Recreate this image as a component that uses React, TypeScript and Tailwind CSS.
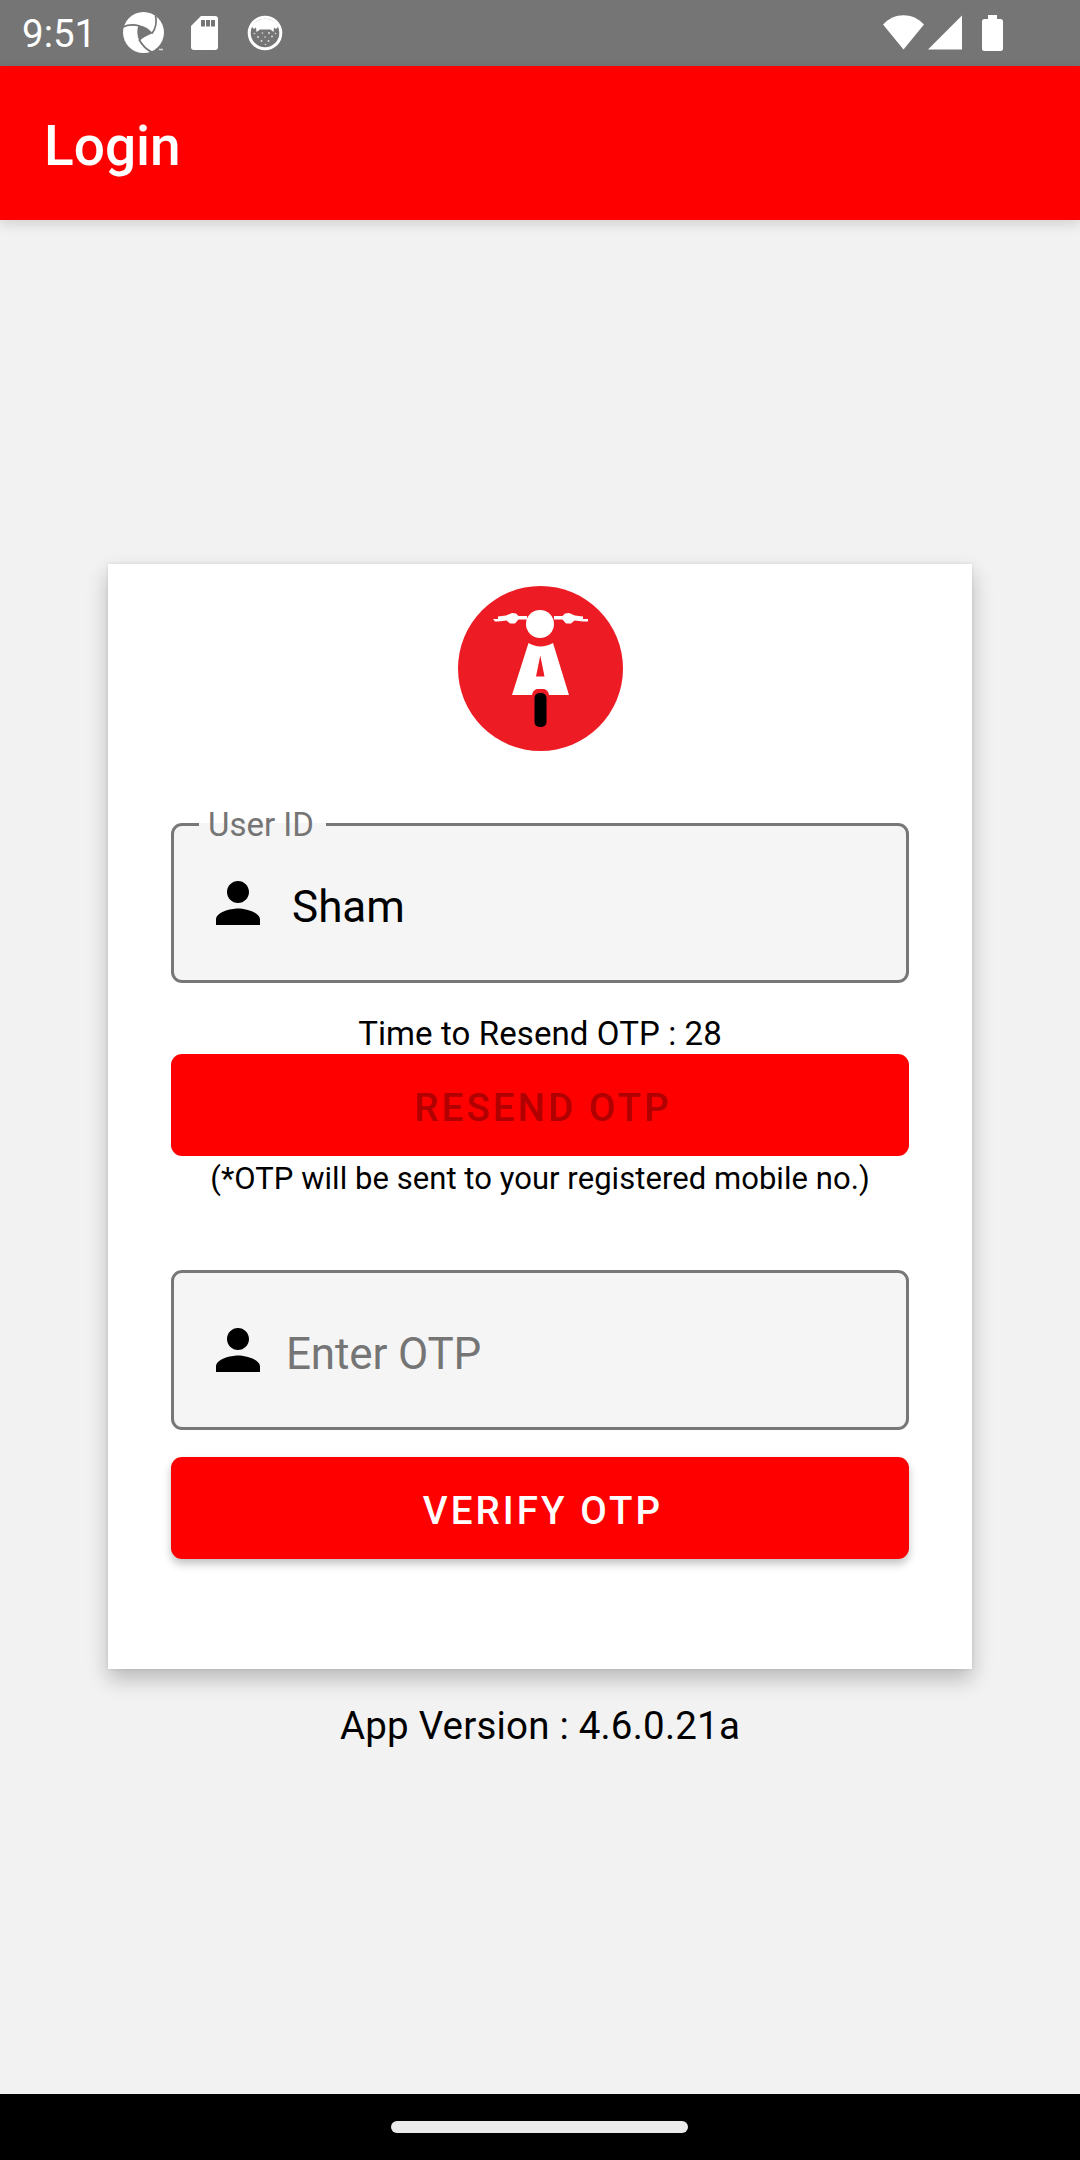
import type { ReactNode } from "react";

function Aperture() {
  return (
    <svg viewBox="0 0 42 42" className="ml-[33px] h-[42px] w-[42px]">
      <circle cx="20.500" cy="20.500" r="20.500" fill="#fff" />
      <path d="M15.300 13.500C19 12.800 25 15.500 29.700 21.300C25 23 20 25.500 16.300 29C14 24 13.800 18 15.300 13.500Z" fill="#757575" />
      <g fill="none" stroke="#757575" strokeWidth="1.700">
        <path d="M0 15C5 12.500 11 12.500 17 14" />
        <path d="M32.500 3.500C34 10 33 16 29 21.500" />
        <path d="M16 27.500C19 33 23 37.500 29.500 40.500" />
      </g>
      <path d="M36 37.500h4" stroke="#ddd" strokeWidth="1.500" />
    </svg>
  );
}

function SdCard() {
  return (
    <svg viewBox="0 0 27 34" className="ml-[26px] h-[34px] w-[27px]">
      <path d="M10 0H24A3 3 0 0 1 27 3V31A3 3 0 0 1 24 34H3A3 3 0 0 1 0 31V10Z" fill="#fff" />
      <path d="M10 4h4v6.500h-4zM15 4h4v6.500h-4zM20 4h4v6.500h-4z" fill="#757575" />
    </svg>
  );
}

function RoundFace() {
  return (
    <svg viewBox="0 0 36 36" className="ml-[29px] h-9 w-9" fill="#fff">
      <circle cx="18" cy="18" r="15.800" fill="none" stroke="#fff" strokeWidth="3" />
      <path d="M5 12C9 1 27 1 31 12L29 14L27 12.500L26.500 17L23.500 14.500H13L9.500 17L9 12.500L7 14Z" />
      <g fillOpacity="0.75">
        <circle cx="11" cy="22" r="1" />
        <circle cx="15.500" cy="18" r="0.800" />
        <circle cx="22" cy="18" r="1" />
        <circle cx="18" cy="22" r="0.800" />
        <circle cx="25" cy="21.500" r="1" />
        <circle cx="14.500" cy="26" r="1" />
        <circle cx="21.500" cy="26" r="1" />
        <circle cx="7.500" cy="18.500" r="0.800" />
        <circle cx="18.500" cy="29.500" r="0.800" />
        <circle cx="28.500" cy="18.500" r="0.800" />
      </g>
    </svg>
  );
}

function StatusBar() {
  return (
    <header className="flex h-[66px] items-center bg-[#757575] text-white">
      <span className="ml-[22px] w-[68px] pt-px text-[38.5px] leading-[45px] whitespace-nowrap">9:51</span>
      <Aperture />
      <SdCard />
      <RoundFace />
      <svg viewBox="0 0 122 38" className="mr-[75px] ml-auto h-[38px] w-[122px]" fill="#fff">
        <path d="M0 10.500C11-2 30-2 41 10.500L20.500 35.500Z" />
        <path d="M45 35.500L79 1.500V35.500Z" />
        <path d="M105 1H114V5H117.500A2.500 2.500 0 0 1 120 7.500V34.500A2.500 2.500 0 0 1 117.500 37H101.500A2.500 2.500 0 0 1 99 34.500V7.500A2.500 2.500 0 0 1 101.500 5H105Z" />
      </svg>
    </header>
  );
}

function Logo() {
  return (
    <svg viewBox="0 0 165 165" className="mt-[22px] ml-[287px] h-[165px] w-[165px]">
      <circle cx="82.500" cy="82.500" r="82.500" fill="#ed1c24" />
      <g fill="#fff">
        <path d="M35 33H40V30.500L48 29.500L54 27L58 27.500L60.500 30H69V33.500H60.500L57 37.500L52 37.500L48.500 34.500L40 35.500H37Z" />
        <path d="M130 33H125V30.500L117 29.500L111 27L107 27.500L104.500 30H96V33.500H104.500L108 37.500L113 37.500L116.500 34.500L125 35.500H130Z" />
        <circle cx="82" cy="38" r="14" />
        <path d="M70.500 57C78 61.500 87 61.500 95 57L111 109H54Z" />
      </g>
      <path d="M82.300 69.500L86.500 90.500H78Z" fill="#ed1c24" />
      <path d="M74 110C74 105.500 77 103 80 103H85C88 103 91 105.500 91 110Z" fill="#ed1c24" />
      <rect x="76.500" y="107" width="12" height="34" rx="5" fill="#000" />
    </svg>
  );
}

function PersonIcon() {
  return (
    <svg viewBox="0 0 24 24" className="ml-[31px] h-[66px] w-[66px] shrink-0" fill="#000">
      <path d="M12 12c2.210 0 4-1.790 4-4s-1.790-4-4-4-4 1.790-4 4 1.790 4 4 4zm0 2c-2.670 0-8 1.340-8 4v2h16v-2c0-2.660-5.330-4-8-4z" />
    </svg>
  );
}

function Field({ label, children }: { label?: string; children: ReactNode }) {
  return (
    <div className="relative flex h-[159.5px] items-center rounded-[11px] border-[3px] border-[#777] bg-[#f5f5f5]">
      {label && (
        <span className="absolute -top-[3px] left-[25px] flex h-[3px] w-[127px] items-center bg-[#f5f5f5] pl-[9px] text-[33px] whitespace-nowrap text-[#757575]">
          {label}
        </span>
      )}
      <PersonIcon />
      {children}
    </div>
  );
}

export default function App() {
  return (
    <div className="flex h-[2160px] w-[1080px] flex-col bg-[#f2f2f2] font-[Roboto,sans-serif] text-black">
      <StatusBar />
      <div className="flex h-[154px] items-center bg-[#f00] pt-1.5 pl-11 shadow-[0_4px_12px_rgba(0,0,0,0.14)]">
        <h1 className="text-[55px] leading-[64px] font-medium text-white">Login</h1>
      </div>
      <main className="flex grow flex-col">
        <section className="mx-[108px] mt-[344px] flex h-[1105px] flex-col bg-white px-[63px] shadow-[0_10px_20px_rgba(0,0,0,0.24),0_0_3px_rgba(0,0,0,0.1)]">
          <Logo />
          <div className="mt-[72px]">
            <Field label="User ID">
              <span className="ml-[21px] pt-2 text-[44px] leading-[52px]">Sham</span>
            </Field>
          </div>
          <p className="mt-[31.5px] h-10 text-center text-[33px] leading-[39px] tracking-[0.1px]">Time to Resend OTP : 28</p>
          <button className="h-[102px] rounded-[11px] bg-[#f00] pt-[5px] pl-[6px] text-[38.5px] font-medium tracking-[0.08em] text-[#b00000]">
            RESEND OTP
          </button>
          <p className="text-center text-[31px] leading-[45px] tracking-[0.05px]">(*OTP will be sent to your registered mobile no.)</p>
          <div className="mt-[69px]">
            <Field>
              <span className="ml-[15px] pt-2 text-[44px] leading-[52px] tracking-[-0.15px] text-[#757575]">Enter OTP</span>
            </Field>
          </div>
          <button className="mt-[27.5px] h-[102px] rounded-[11px] bg-[#f00] pt-[5px] pl-[6px] text-[38.5px] font-medium tracking-[0.08em] text-white shadow-[0_5px_9px_rgba(0,0,0,0.24)]">
            VERIFY OTP
          </button>
        </section>
        <p className="mt-[34px] text-center text-[38.5px] leading-[45px] tracking-[0.2px]">App Version : 4.6.0.21a</p>
      </main>
      <footer className="flex h-[66px] items-center justify-center bg-black pr-px">
        <div className="h-3 w-[297px] rounded-full bg-[#ebebeb]" />
      </footer>
    </div>
  );
}
